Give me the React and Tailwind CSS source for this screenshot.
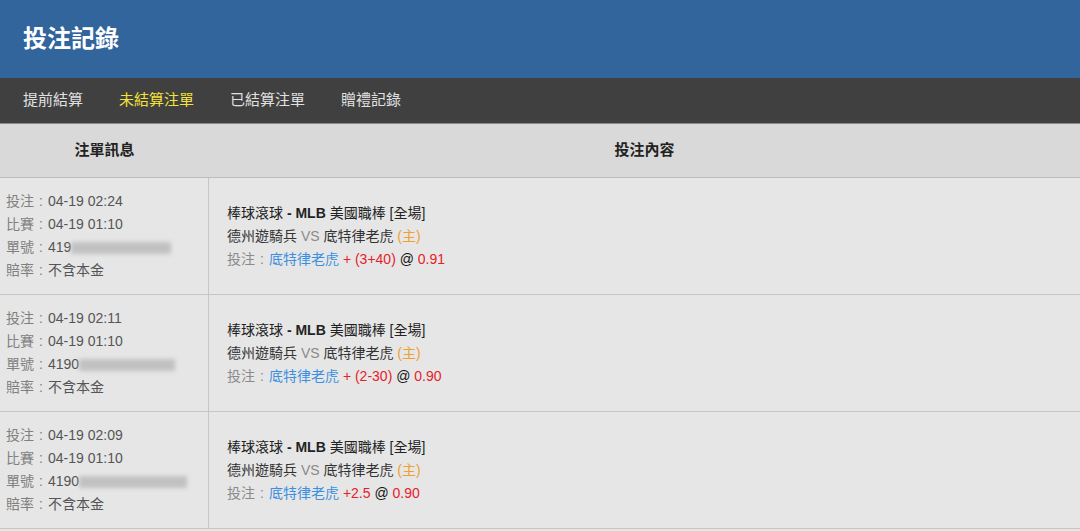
import React from "react";

const tabs = ["提前結算", "未結算注單", "已結算注單", "贈禮記錄"];

const bets = [
  { placed: "04-19 02:24", match: "04-19 01:10", id: "419", blurW: "w-[100px]", pick: "+ (3+40)", odds: "0.91" },
  { placed: "04-19 02:11", match: "04-19 01:10", id: "4190", blurW: "w-[96px]", pick: "+ (2-30)", odds: "0.90" },
  { placed: "04-19 02:09", match: "04-19 01:10", id: "4190", blurW: "w-[108px]", pick: "+2.5", odds: "0.90" },
];

// full-width colon drawn centered, as the TC glyph is
function Colon() {
  return <span className="inline-block w-[14px] text-center">:</span>;
}

function InfoLine({ label, children }) {
  return (
    <div className="h-[23.3px] flex items-center">
      <span className="text-[#808080]">
        {label}
        <Colon />
      </span>
      <span className="text-[#555]">{children}</span>
    </div>
  );
}

export default function App() {
  return (
    <div
      lang="zh-Hant"
      className="w-[1080px] h-[531px] overflow-hidden bg-[#e6e6e6]"
      style={{ fontFamily: '"Liberation Sans", "Noto Sans CJK TC", sans-serif' }}
    >
      {/* Title bar */}
      <div className="h-[78px] bg-[#31659b] flex items-center px-[23px]">
        <h1 className="text-white text-[24px] font-bold">投注記錄</h1>
      </div>

      {/* Tabs */}
      <div className="h-[46px] bg-[#404040] border-b border-[#8a8a8a] flex items-center px-[5px]">
        {tabs.map((t, i) => (
          <div
            key={t}
            className={`px-[18px] text-[15px] ${i === 1 ? "text-[#f2e23a]" : "text-[#e0e0e0]"}`}
          >
            {t}
          </div>
        ))}
      </div>

      {/* Table header */}
      <div className="h-[54px] bg-[#d9d9d9] border-b border-[#bdbdbd] flex text-[15px] font-bold text-[#222]">
        <div className="w-[209px] flex items-center justify-center">注單訊息</div>
        <div className="flex-1 flex items-center justify-center">投注內容</div>
      </div>

      {/* Rows */}
      {bets.map((b, i) => (
        <div key={i} className="h-[117px] flex border-b border-[#c6c6c6] text-[14px]">
          <div className="w-[209px] border-r border-[#c6c6c6] pl-[6px] flex flex-col justify-center">
            <InfoLine label="投注">{b.placed}</InfoLine>
            <InfoLine label="比賽">{b.match}</InfoLine>
            <InfoLine label="單號">
              <span className="inline-flex items-center">
                {b.id}
                <span className={`inline-block ${b.blurW} h-[12px] bg-[#b8b8b8] blur-[2px] opacity-80`} />
              </span>
            </InfoLine>
            <InfoLine label="賠率">不含本金</InfoLine>
          </div>
          <div className="flex-1 pl-[18px] flex flex-col justify-center">
            <div className="h-[23px] flex items-center text-[#222]">
              棒球滾球&nbsp;<span className="font-bold">- MLB</span>&nbsp;美國職棒 [全場]
            </div>
            <div className="h-[23px] flex items-center text-[#333]">
              德州遊騎兵&nbsp;<span className="text-[#8a8a8a]">VS</span>&nbsp;底特律老虎&nbsp;
              <span className="text-[#f0a030]">(主)</span>
            </div>
            <div className="h-[23px] flex items-center">
              <span className="text-[#8a8a8a]">
                投注
                <Colon />
              </span>
              <span className="text-[#3b8fe0]">底特律老虎</span>&nbsp;
              <span className="text-[#e8202a]">{b.pick}</span>&nbsp;
              <span className="text-[#111]">@</span>&nbsp;
              <span className="text-[#e8202a]">{b.odds}</span>
            </div>
          </div>
        </div>
      ))}
    </div>
  );
}
